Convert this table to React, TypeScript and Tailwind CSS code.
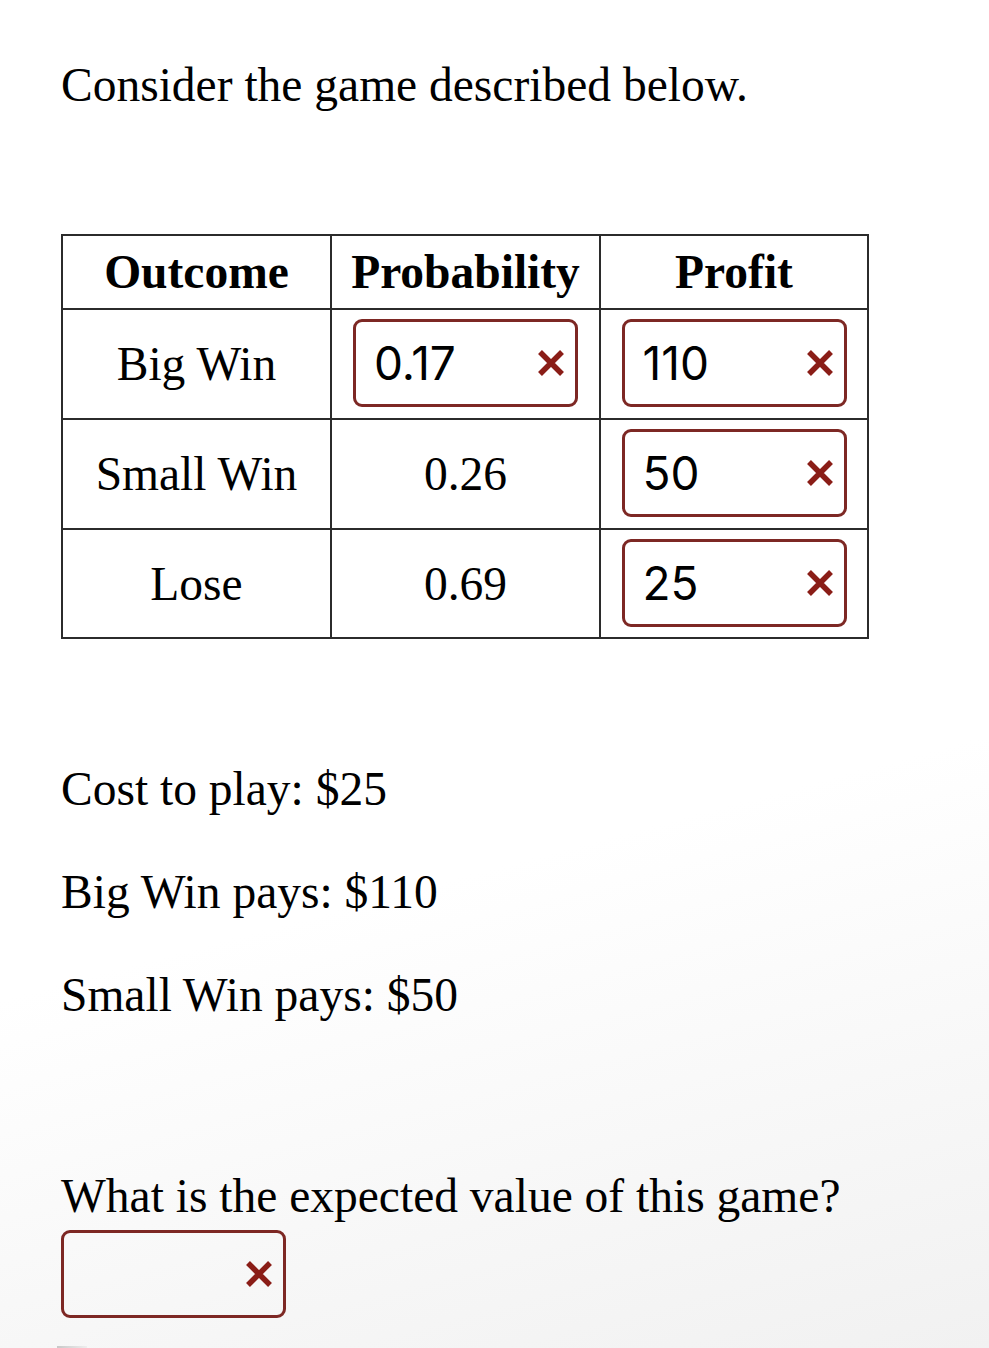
import React from "react";

function XMark() {
  return (
    <svg width="30" height="28" viewBox="0 0 30 28" className="shrink-0">
      <path d="M4 3 L26 25 M26 3 L4 25" stroke="#8a1d17" strokeWidth="5.5" strokeLinecap="butt" fill="none" />
    </svg>
  );
}

function Field({ value }: { value?: string }) {
  return (
    <div className="w-[225px] h-[88px] rounded-[9px] border-[3px] border-[#7d2824] bg-transparent flex items-center justify-between pl-[18px] pr-[9px]">
      <span className="font-['Inter','Liberation_Sans',sans-serif] text-[46px] leading-none text-black">{value}</span>
      <XMark />
    </div>
  );
}

export default function App() {
  const cell = "border-2 border-[#2b2b2b] text-center align-middle p-0";
  return (
    <div className="min-h-[1348px] w-full bg-[linear-gradient(165deg,#ffffff_62%,#f1f1f1_100%)] font-['Liberation_Serif','Times_New_Roman',serif] text-black overflow-hidden">
      <div className="pl-[61px] pt-[57px]">
        <p className="text-[47.5px] leading-[56px]">Consider the game described below.</p>

        <table className="mt-[121px] border-collapse text-[47.5px] leading-[56px]">
          <tbody>
            <tr className="h-[74px]">
              <th className={`${cell} w-[269px] font-bold`}>Outcome</th>
              <th className={`${cell} w-[269px] font-bold`}>Probability</th>
              <th className={`${cell} w-[268px] font-bold`}>Profit</th>
            </tr>
            <tr className="h-[110px]">
              <td className={cell}>Big Win</td>
              <td className={cell}>
                <div className="flex justify-center pt-[1px] pb-[3px]">
                  <Field value="0.17" />
                </div>
              </td>
              <td className={cell}>
                <div className="flex justify-center pt-[1px] pb-[3px]">
                  <Field value="110" />
                </div>
              </td>
            </tr>
            <tr className="h-[110px]">
              <td className={cell}>Small Win</td>
              <td className={cell}>0.26</td>
              <td className={cell}>
                <div className="flex justify-center pt-[1px] pb-[3px]">
                  <Field value="50" />
                </div>
              </td>
            </tr>
            <tr className="h-[109px]">
              <td className={cell}>Lose</td>
              <td className={cell}>0.69</td>
              <td className={cell}>
                <div className="flex justify-center pt-[1px] pb-[3px]">
                  <Field value="25" />
                </div>
              </td>
            </tr>
          </tbody>
        </table>

        <p className="mt-[122px] text-[47.5px] leading-[56px]">Cost to play: $25</p>
        <p className="mt-[47px] text-[47.5px] leading-[56px]">Big Win pays: $110</p>
        <p className="mt-[47px] text-[47.5px] leading-[56px]">Small Win pays: $50</p>

        <p className="mt-[145px] text-[47.5px] leading-[56px]">What is the expected value of this game?</p>
        <div className="mt-[6px]">
          <Field />
        </div>
        <div className="mt-[28px] -ml-[4px] h-[2px] w-[30px] bg-[linear-gradient(90deg,#c8c8c8,#eeeeee)]" />
      </div>
    </div>
  );
}
